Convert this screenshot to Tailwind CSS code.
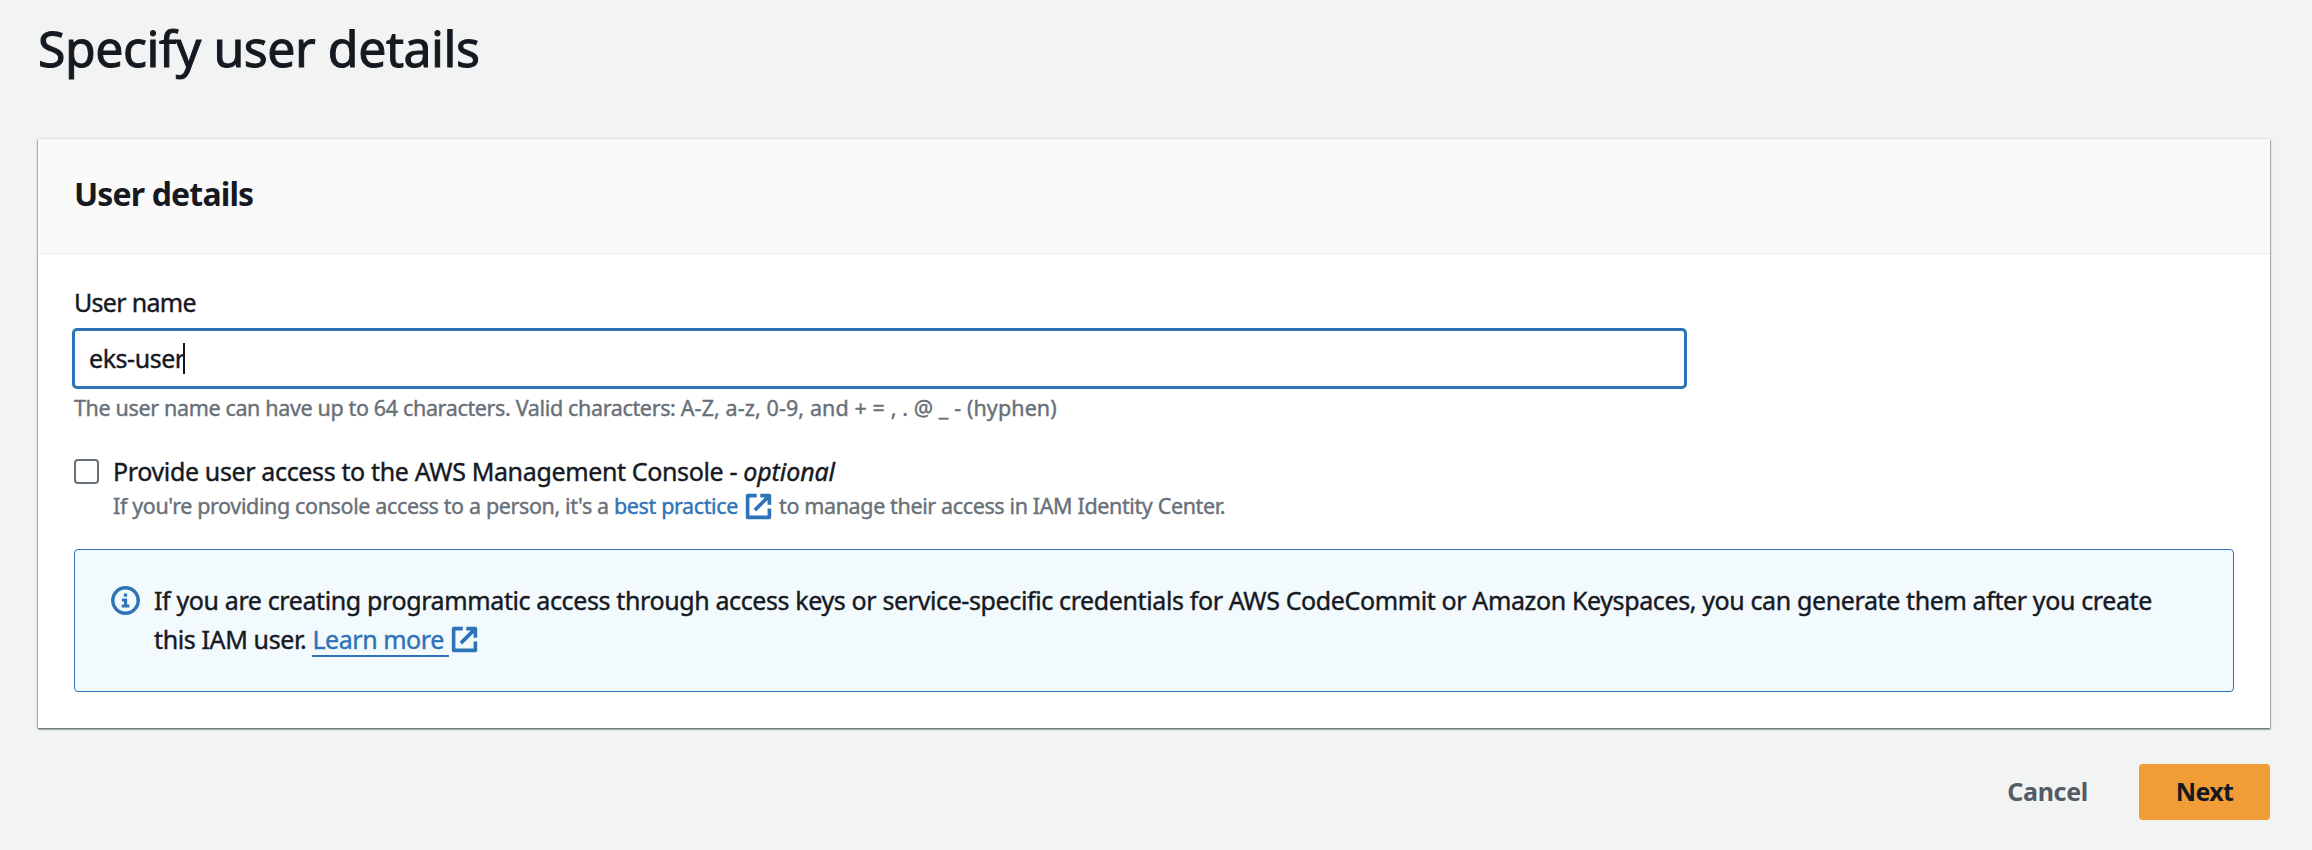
<!DOCTYPE html>
<html lang="en">
<head>
<meta charset="utf-8">
<title>Specify user details</title>
<script src="https://cdn.jsdelivr.net/npm/@tailwindcss/browser@4"></script>
</head>
<body class="bg-[#f2f3f3] text-[#16191f] font-['Noto_Sans',sans-serif] text-[25px] leading-[30px] h-[850px] overflow-hidden [-webkit-text-stroke:0.4px]">
<svg class="hidden">
  <symbol id="external" viewBox="0 0 16 16">
    <path d="M9 2h5v5M6 10l8-8M14 9.048V14H2V2h5" fill="none" stroke="currentColor" stroke-width="2" stroke-linejoin="round"/>
  </symbol>
</svg>
<main class="flex flex-col pl-[38px] pr-[42px] pt-[18px]">
  <h1 class="text-[50px] leading-[60px] tracking-[-0.45px] whitespace-nowrap [-webkit-text-stroke:1px]">Specify user details</h1>

  <section class="mt-[61px] h-[589px] bg-white shadow-[0_0_1px_0_rgba(0,28,36,0.2),0_1px_2px_0_rgba(0,28,36,0.5),1px_2px_1px_0_rgba(0,28,36,0.15),-1px_1px_1px_0_rgba(0,28,36,0.15)]">
    <header class="h-[115px] bg-[#fafafa] border-b border-[#eaeded] px-9 pt-[35px]">
      <h2 class="text-[32px] leading-[40px] font-bold tracking-[-0.85px] whitespace-nowrap [-webkit-text-stroke:0]">User details</h2>
    </header>

    <div class="px-9 pt-[33px] whitespace-nowrap">
      <label class="block tracking-[-0.7px]">User name</label>
      <div class="mt-[11px] -ml-[2px] w-[1615px] h-[61px] flex items-center border-[3px] border-[#2e73b8] rounded-[5px] pl-[14px]">
        <span class="tracking-[-0.45px] pb-px">eks-user</span>
        <span class="w-[2px] h-[31px] bg-[#16191f] -ml-[2px]"></span>
      </div>
      <p class="mt-1 text-[21.5px] text-[#687078] tracking-[-0.35px]">The user name can have up to 64 characters. Valid characters: <span class="tracking-[0.1px]">A-Z, a-z, 0-9, and + = , . @ _ - (hyphen)</span></p>

      <div class="mt-[33px] flex">
        <span class="mt-[3px] w-[25px] h-[25px] border-2 border-[#687078] rounded-[4px] bg-white"></span>
        <div class="ml-[14px]">
          <p class="tracking-[-0.36px]">Provide user access to the AWS Management Console - <em class="tracking-[-0.1px]">optional</em></p>
          <p class="mt-[5px] text-[21.5px] text-[#687078] tracking-[-0.37px] flex items-center">
            <span class="whitespace-pre">If you're providing console access to a person, it's a </span>
            <a class="text-[#2e73b8]">best practice</a>
            <svg class="ml-[6px] mr-[6px] w-[29px] h-[29px] text-[#2e73b8]"><use href="#external"/></svg>
            <span>to manage their access in IAM Identity Center.</span>
          </p>
        </div>
      </div>

      <div class="mt-7 h-[143px] border border-[#2e73b8] rounded-[4px] bg-[#f2fafd] flex pl-[36px] pt-[31px]">
        <svg class="mt-[5px] w-[29px] h-[29px] text-[#2e73b8]" viewBox="0 0 16 16">
          <circle cx="8" cy="8" r="7" fill="none" stroke="currentColor" stroke-width="1.9"/>
          <path fill="currentColor" d="M7.1 4.1h1.8v1.8H7.1zM6 6.9h2.9v3.3h1.2v1.7H5.9v-1.7h1.3V8.5H6z"/>
        </svg>
        <div class="ml-[14px] leading-[39px] tracking-[-0.381px]">
          <p>If you are creating programmatic access through access keys or service-specific credentials for AWS CodeCommit or Amazon Keyspaces, you can generate them after you create</p>
          <p class="flex items-start"><span class="whitespace-pre">this IAM user. </span><a class="h-[37px] border-b-2 border-[#2e73b8] text-[#2e73b8] w-[137px] tracking-[-0.45px]">Learn more</a><svg class="mt-[5px] ml-px w-[29px] h-[29px] text-[#2e73b8]"><use href="#external"/></svg></p>
        </div>
      </div>
    </div>
  </section>

  <footer class="mt-9 flex justify-end items-center font-bold [-webkit-text-stroke:0]">
    <button class="mr-[51px] mb-[2px] text-[#545b64] tracking-[-0.3px]">Cancel</button>
    <button class="w-[131px] h-[56px] pb-[2px] bg-[#f09d37] rounded-[4px] tracking-[-0.7px]">Next</button>
  </footer>
</main>
</body>
</html>
